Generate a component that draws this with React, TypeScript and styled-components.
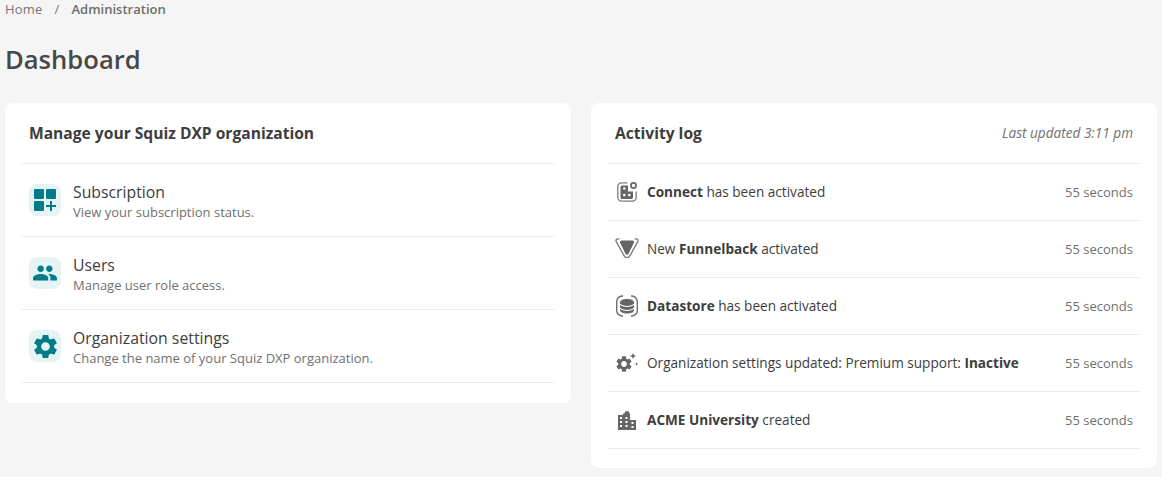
import React from "react";
import styled, { createGlobalStyle } from "styled-components";

const Global = createGlobalStyle`
  html, body { margin: 0; padding: 0; background: #f5f5f5; }
  body { font-family: "Open Sans", "Noto Sans", sans-serif; color: #3d3d3d; }
`;
const Page = styled.div`
  width: 1162px; height: 477px; overflow: hidden; box-sizing: border-box;
  padding: 0 5px; display: flex; flex-direction: column;
`;
const Breadcrumb = styled.nav`
  display: flex; align-items: center; height: 18px; font-size: 13px; letter-spacing: .2px; color: #757575;
`;
const Sep = styled.span`margin: 0 12px 0 12px;`;
const Current = styled.span`font-weight: 600; color: #6e6e6e; letter-spacing: 0;`;
const Title = styled.h1`
  margin: 24px 0 0; font-size: 25.6px; line-height: 36px; font-weight: 600; color: #484848;
`;
const Columns = styled.div`
  margin-top: 25px; display: grid; grid-template-columns: 566px 566px; gap: 20px; align-items: start;
`;
const Card = styled.section<{ $bottom: number }>`
  background: #fff; border-radius: 8px; padding: 0 16px ${(p) => p.$bottom}px;
  box-shadow: 0 1px 2px rgba(0,0,0,.02);
`;
const CardHead = styled.header`
  height: 61px; box-sizing: border-box; padding: 0 8px; display: flex; align-items: center; justify-content: space-between;
  border-bottom: 1px solid #ededed;
`;
const CardTitle = styled.h2`margin: 0; font-size: 15.6px; font-weight: 700; color: #3d3d3d;`;
const Updated = styled.span`font-size: 13.6px; font-style: italic; color: #707070; padding-bottom: 2px;`;
const NavRow = styled.div`
  height: 73px; box-sizing: border-box; padding: 0 8px; display: flex; align-items: center; gap: 12px;
  border-bottom: 1px solid #ededed;
`;
const IconTile = styled.div`
  width: 32px; height: 32px; border-radius: 8px; background: #e5f3f5; display: flex; align-items: center; justify-content: center; flex: none;
`;
const NavText = styled.div`display: flex; flex-direction: column; padding-top: 2px;`;
const NavTitle = styled.div`font-size: 15.8px; line-height: 22px; color: #3d3d3d;`;
const NavSub = styled.div`font-size: 13px; line-height: 18px; color: #707070;`;
const LogRow = styled.div`
  height: 57px; box-sizing: border-box; padding: 0 8px 2px; display: flex; align-items: center;
  border-bottom: 1px solid #ededed; font-size: 13.6px; color: #3d3d3d;
`;
const LogIcon = styled.div`width: 24px; height: 24px; margin: 2px 8px 0 0; display: flex; align-items: center; justify-content: center; flex: none;`;
const LogText = styled.div`flex: 1;`;
const Strong = styled.b`font-weight: 700;`;
const Time = styled.span`font-size: 13px; color: #707070; padding-top: 1px;`;

const TEAL = "#007b8a";
const GREY = "#666666";

const Grid = () => (
  <svg width="24" height="24" viewBox="0 0 24 24" fill={TEAL}>
    <rect x="1" y="1" width="10" height="10" rx="1.200" /><rect x="13" y="1" width="10" height="10" rx="1.200" />
    <rect x="1" y="13" width="10" height="10" rx="1.200" />
    <path d="M17 13h2v4h4v2h-4v4h-2v-4h-4v-2h4z" />
  </svg>
);
const People = () => (
  <svg width="26" height="26" viewBox="0 0 24 24" fill={TEAL}>
    <path d="M16 11c1.660 0 2.990-1.340 2.990-3S17.660 5 16 5c-1.660 0-3 1.340-3 3s1.340 3 3 3zm-8 0c1.660 0 2.990-1.340 2.990-3S9.660 5 8 5C6.340 5 5 6.340 5 8s1.340 3 3 3zm0 2c-2.330 0-7 1.170-7 3.500V19h14v-2.500c0-2.330-4.670-3.500-7-3.500zm8 0c-.29 0-.62.02-.97.05 1.160.84 1.970 1.970 1.970 3.450V19h6v-2.500c0-2.330-4.670-3.500-7-3.500z" />
  </svg>
);
const gearD = "M19.14 12.94c.04-.3.06-.61.06-.94 0-.32-.02-.64-.07-.94l2.030-1.580c.18-.14.23-.41.12-.61l-1.920-3.320c-.12-.22-.37-.29-.59-.22l-2.390.96c-.5-.38-1.030-.7-1.620-.94l-.36-2.540c-.04-.24-.24-.41-.48-.41h-3.840c-.24 0-.43.17-.47.41l-.36 2.540c-.59.24-1.130.57-1.620.94l-2.390-.96c-.22-.08-.47 0-.59.22L2.740 8.870c-.12.21-.08.47.12.61l2.030 1.580c-.05.3-.09.63-.09.94s.02.64.07.94l-2.030 1.580c-.18.14-.23.41-.12.61l1.920 3.320c.12.22.37.29.59.22l2.390-.96c.5.38 1.030.7 1.620.94l.36 2.540c.05.24.24.41.48.41h3.840c.24 0 .44-.17.47-.41l.36-2.540c.59-.24 1.130-.56 1.620-.94l2.390.96c.22.08.47 0 .59-.22l1.920-3.320c.12-.22.07-.47-.12-.61l-2.010-1.580zM12 15.600c-1.980 0-3.600-1.620-3.600-3.600s1.620-3.600 3.600-3.600 3.600 1.620 3.600 3.600-1.620 3.600-3.600 3.600z";
const Gear = () => (
  <svg width="29" height="29" viewBox="0 0 24 24" fill={TEAL}><path d={gearD} /></svg>
);
const Connect = () => (
  <svg width="24" height="24" viewBox="0 0 24 24" fill="none">
    <path d="M12.500 2.800H6.500a3.700 3.700 0 0 0-3.700 3.700v11a3.700 3.700 0 0 0 3.700 3.700h11a3.700 3.700 0 0 0 3.700-3.700v-6" stroke="#7a7a7a" strokeWidth="1.300" />
    <path fillRule="evenodd" fill={GREY} d="M7 5.500h6v6h5v6a1.500 1.500 0 0 1-1.500 1.500h-9.500A1.500 1.500 0 0 1 5.500 17.500V7A1.500 1.500 0 0 1 7 5.500zM8 8.500a1.300 1.300 0 1 0 2.600 0a1.300 1.300 0 1 0-2.600 0zM8 15a1.300 1.300 0 1 0 2.600 0a1.300 1.300 0 1 0-2.600 0zM13 15a1.300 1.300 0 1 0 2.600 0a1.300 1.300 0 1 0-2.600 0z" />
    <circle cx="18.500" cy="5.500" r="2.600" stroke={GREY} strokeWidth="1.700" />
  </svg>
);
const Funnel = () => (
  <svg width="24" height="24" viewBox="0 0 24 24" fill="none">
    <path d="M4.500 1.800H3c-1.700 0-2.500 1.400-1.700 2.800l7.800 14.300c1.300 2.400 4.500 2.400 5.800 0l7.800-14.300c.8-1.400 0-2.800-1.700-2.800h-1.500" stroke="#7a7a7a" strokeWidth="1.300" />
    <path d="M6.500 3.500h11c1.300 0 2 1.300 1.300 2.400l-5.300 10.800c-.7 1.300-2.300 1.300-3 0L5.200 5.900c-.7-1.100 0-2.400 1.300-2.400z" fill={GREY} />
  </svg>
);
const Datastore = () => (
  <svg width="24" height="24" viewBox="0 0 24 24" fill="none">
    <path d="M8 2H7a5.500 5.500 0 0 0-5.300 5.500v9A5.500 5.500 0 0 0 7 22h1M16 2h1a5.500 5.500 0 0 1 5.300 5.500v9A5.500 5.500 0 0 1 17 22h-1" stroke="#6e6e6e" strokeWidth="1.400" />
    <path d="M5 8.500C5 6.300 8 5 12 5s7 1.300 7 3.500v7.500c0 2.200-3 3.500-7 3.500S5 18.200 5 16z" fill={GREY} />
    <path d="M5 10.200c1.500 1.700 4 2.300 7 2.300s5.500-.6 7-2.300M5 14.200c1.500 1.700 4 2.300 7 2.300s5.500-.6 7-2.300" stroke="#fff" strokeWidth="1.100" />
  </svg>
);
const GearSpark = () => (
  <svg width="24" height="24" viewBox="0 0 24 24" fill={GREY}>
    <g transform="translate(-0.600 3.400) scale(0.800)"><path d={gearD} /></g>
    <path d="M18 2l.9 2.100 2.100.9-2.100.9-.9 2.100-.9-2.100-2.100-.9 2.100-.9zM21.500 11.200l.5 1.300 1.300.5-1.300.5-.5 1.300-.5-1.300-1.300-.5 1.300-.5z" />
  </svg>
);
const City = () => (
  <svg width="24" height="24" viewBox="0 0 24 24" fill={GREY} fillRule="evenodd">
    <path d="M3 7h5V5.500h1.500a2.500 2.500 0 0 1 5 0H15V12h6v10H3zM5 9v2h2V9zM5 13v2h2v-2zM5 17v2h2v-2zM10.500 9v2h2V9zM10.500 13v2h2v-2zM10.500 17v2h2v-2zM16.500 14v2h2v-2zM16.500 18v2h2v-2z" />
  </svg>
);

const navItems = [
  { icon: <Grid />, title: "Subscription", sub: "View your subscription status." },
  { icon: <People />, title: "Users", sub: "Manage user role access." },
  { icon: <Gear />, title: "Organization settings", sub: "Change the name of your Squiz DXP organization." },
];
const logItems = [
  { icon: <Connect />, text: <><Strong>Connect</Strong> has been activated</> },
  { icon: <Funnel />, text: <>New <Strong>Funnelback</Strong> activated</> },
  { icon: <Datastore />, text: <><Strong>Datastore</Strong> has been activated</> },
  { icon: <GearSpark />, text: <>Organization settings updated: Premium support: <Strong>Inactive</Strong></> },
  { icon: <City />, text: <><Strong>ACME University</Strong> created</> },
];

export default function App() {
  return (
    <Page>
      <Global />
      <Breadcrumb>Home<Sep>/</Sep><Current>Administration</Current></Breadcrumb>
      <Title>Dashboard</Title>
      <Columns>
        <Card $bottom={20}>
          <CardHead><CardTitle>Manage your Squiz DXP organization</CardTitle></CardHead>
          {navItems.map((n) => (
            <NavRow key={n.title}>
              <IconTile>{n.icon}</IconTile>
              <NavText><NavTitle>{n.title}</NavTitle><NavSub>{n.sub}</NavSub></NavText>
            </NavRow>
          ))}
        </Card>
        <Card $bottom={19}>
          <CardHead><CardTitle>Activity log</CardTitle><Updated>Last updated 3:11 pm</Updated></CardHead>
          {logItems.map((l, i) => (
            <LogRow key={i}>
              <LogIcon>{l.icon}</LogIcon>
              <LogText>{l.text}</LogText>
              <Time>55 seconds</Time>
            </LogRow>
          ))}
        </Card>
      </Columns>
    </Page>
  );
}
